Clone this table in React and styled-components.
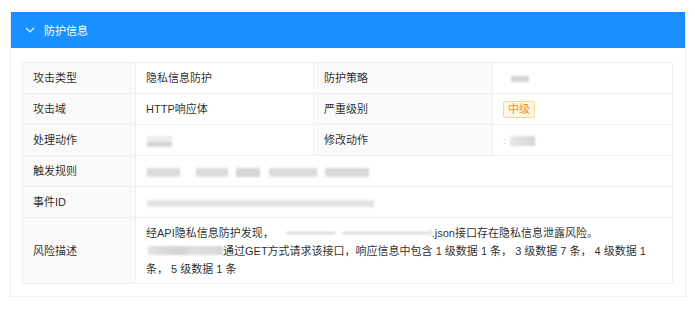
import React from "react";
import styled, { createGlobalStyle } from "styled-components";

const Global = createGlobalStyle`
  html, body { margin: 0; padding: 0; background: #fff; }
  body {
    font-family: "Liberation Sans", "Noto Sans CJK SC", sans-serif;
    font-size: 11px;
    color: rgba(0, 0, 0, 0.85);
  }
`;

const Page = styled.div`
  padding: 12px 10px 12px 10px;
`;

const Card = styled.section`
  border: 1px solid #f0f0f0;
  border-top: none;
  width: 674px;
`;

const Header = styled.div`
  display: flex;
  align-items: center;
  gap: 9px;
  height: 36px;
  padding-left: 14px;
  background: #1890ff;
  color: #fff;
  font-size: 11px;
`;

const Body = styled.div`
  padding: 14px 12px 12px 11px;
`;

const Table = styled.table`
  width: 650px;
  border-collapse: collapse;
  table-layout: fixed;
  border: 1px solid #f0f0f0;
`;

const Row = styled.tr`
  height: ${(p) => p.$h || 31}px;
`;

const Label = styled.th`
  background: #fafafa;
  border: 1px solid #f0f0f0;
  padding: 0 10px;
  font-weight: normal;
  text-align: left;
  color: rgba(0, 0, 0, 0.85);
  line-height: 18px;
`;

const Value = styled.td`
  border: 1px solid #f0f0f0;
  padding: 5px 10px;
  color: rgba(0, 0, 0, 0.85);
  line-height: 18px;
  vertical-align: middle;
`;

const Tag = styled.span`
  display: inline-block;
  height: 15px;
  line-height: 15px;
  padding: 0 4px;
  border: 1px solid #ffd591;
  background: #fff7e6;
  color: #fa8c16;
  border-radius: 2px;
  font-size: 11px;
`;

/* masked values: soft grey bars standing in for hidden data */
const Mask = styled.span`
  display: inline-block;
  vertical-align: middle;
  width: ${(p) => p.$w}px;
  height: ${(p) => p.$h || 9}px;
  margin-left: ${(p) => p.$ml || 0}px;
  background: ${(p) => p.$bg || "#dcdcdc"};
  filter: blur(1.2px);
  border-radius: 1px;
`;

const Line = styled.div`
  white-space: nowrap;
  display: flex;
  align-items: center;
`;

const Dots = styled.span`
  display: inline-block;
  color: #bbb;
  font-size: 9px;
  margin-right: 4px;
  vertical-align: middle;
`;

function Chevron() {
  return (
    <svg width="10" height="6" viewBox="0 0 10 6">
      <polyline points="1,0.8 5,5 9,0.8" fill="none" stroke="#fff" strokeWidth="1.1" />
    </svg>
  );
}

export default function App() {
  return (
    <>
      <Global />
      <Page>
        <Card>
          <Header>
            <Chevron />
            <span>防护信息</span>
          </Header>
          <Body>
            <Table>
              <colgroup>
                <col style={{ width: 113 }} />
                <col style={{ width: 178 }} />
                <col style={{ width: 179 }} />
                <col style={{ width: 180 }} />
              </colgroup>
              <tbody>
                <Row>
                  <Label>攻击类型</Label>
                  <Value>隐私信息防护</Value>
                  <Label>防护策略</Label>
                  <Value>
                    <Mask $w={18} $h={6} $ml={8} $bg="#d4d4d4" />
                  </Value>
                </Row>
                <Row>
                  <Label>攻击域</Label>
                  <Value>HTTP响应体</Value>
                  <Label>严重级别</Label>
                  <Value>
                    <Tag>中级</Tag>
                  </Value>
                </Row>
                <Row>
                  <Label>处理动作</Label>
                  <Value>
                    <Mask $w={25} $h={11} $ml={1} $bg="linear-gradient(#ececec 55%, #cfcfcf 60%, #dcdcdc)" />
                  </Value>
                  <Label>修改动作</Label>
                  <Value>
                    <Dots>:</Dots>
                    <Mask $w={25} $h={10} $bg="linear-gradient(90deg, #e6e6e6, #dedede 70%, #d2d2d2)" />
                  </Value>
                </Row>
                <Row>
                  <Label>触发规则</Label>
                  <Value colSpan={3}>
                    <Mask $w={33} $ml={1} />
                    <Mask $w={32} $ml={16} />
                    <Mask $w={24} $ml={8} $bg="#d4d4d4" />
                    <Mask $w={48} $ml={9} />
                    <Mask $w={44} $ml={8} $bg="#d9d9d9" />
                  </Value>
                </Row>
                <Row>
                  <Label>事件ID</Label>
                  <Value colSpan={3}>
                    <Mask $w={227} $h={7} $ml={1} $bg="#e4e4e4" />
                  </Value>
                </Row>
                <Row $h={66}>
                  <Label>风险描述</Label>
                  <Value colSpan={3}>
                    <Line>
                      经API隐私信息防护发现，
                      <Mask $w={50} $h={2} $ml={12} $bg="#d0d0d0" />
                      <Mask $w={87} $h={2} $ml={6} $bg="#d0d0d0" />
                      <Mask $w={3} $h={6} $ml={0} $bg="#e2e2e2" />
                      .json接口存在隐私信息泄露风险。
                    </Line>
                    <Line>
                      <Mask $w={75} $h={9} $ml={2} $bg="linear-gradient(90deg, #e2e2e2, #d2d2d2 45%, #e0e0e0 60%, #d8d8d8)" />
                      通过GET方式请求该接口，响应信息中包含 1 级数据 1 条， 3 级数据 7 条， 4 级数据 1
                    </Line>
                    <Line>条， 5 级数据 1 条</Line>
                  </Value>
                </Row>
              </tbody>
            </Table>
          </Body>
        </Card>
      </Page>
    </>
  );
}
